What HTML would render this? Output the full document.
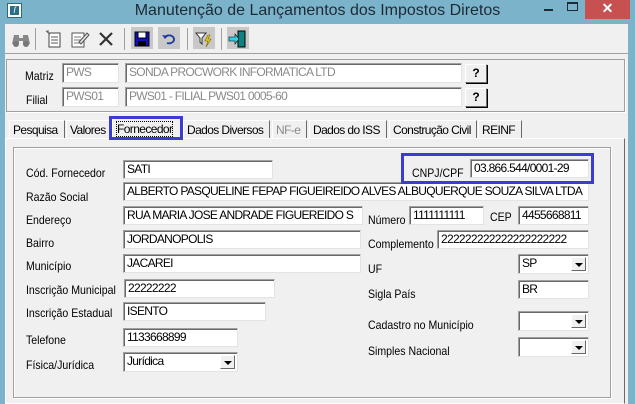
<!DOCTYPE html>
<html><head><meta charset="utf-8"><style>
*{box-sizing:border-box;margin:0;padding:0}
body{width:635px;height:404px;background:#7bb3cb;position:relative;overflow:hidden;font-family:"Liberation Sans",sans-serif;font-size:12px;color:#000}
.a{position:absolute}
.client{left:5px;top:24px;width:623px;height:380px;background:#f0f0f0}
.inp{position:absolute;background:#fff;border-top:1px solid #a0a0a0;border-left:1px solid #a0a0a0;border-right:1px solid #e3e3e3;border-bottom:1px solid #e3e3e3;box-shadow:inset 1px 1px 0 #696969;padding:1px 0 0 3px;font-size:12px;white-space:nowrap;overflow:hidden;letter-spacing:-0.7px;line-height:15px}
.dis{color:#8a8a8a}
.lbl{position:absolute;font-size:12px;white-space:nowrap;transform:scaleX(0.88);transform-origin:left top}
.btn{position:absolute;background:#f0f0f0;border:1px solid #fff;border-right-color:#696969;border-bottom-color:#696969;box-shadow:1px 1px 0 #000;font-weight:bold;text-align:center;line-height:17px}
.dd{position:absolute;right:2px;top:2px;width:15px;height:14px;background:#f0f0f0;border:1px solid #fff;border-right-color:#696969;border-bottom-color:#696969}
.dd:after{content:"";position:absolute;left:3px;top:5px;border-left:4px solid transparent;border-right:4px solid transparent;border-top:4px solid #000}
.tab{position:absolute;top:120px;height:18px;border:1px solid #fff;border-right-color:#696969;border-bottom:none;padding:2px 3px 0;font-size:12px;letter-spacing:-0.6px;white-space:nowrap;overflow:hidden}
.ico{position:absolute;top:29px;width:20px;height:20px}
</style></head><body>
<div class="a" style="left:7px;top:3px;width:15px;height:15px;background:#fff;border:1px solid #2d6a7b"><div style="position:absolute;left:2px;top:2px;width:9px;height:9px;background:#2a6f86;color:#fff;font-size:9px;line-height:9px;text-align:center;font-style:italic">ſ</div></div>
<div class="a" style="left:0;top:0;width:635px;text-align:center;font-size:16px;line-height:22px;color:#1e2a34">Manutenção de Lançamentos dos Impostos Diretos</div>
<div class="a" style="left:544px;top:9px;width:9px;height:2px;background:#1e2a34"></div>
<div class="a" style="left:567px;top:2px;width:11px;height:9px;border:1px solid #1e2a34;border-top-width:2px"></div>
<div class="a" style="left:585px;top:0;width:45px;height:19px;background:#c75050;color:#fff;text-align:center;font-size:14px;line-height:17px;font-weight:bold">✕</div>
<div class="a client"></div>
<!-- toolbar -->
<svg class="ico" style="left:11px" viewBox="0 0 20 20"><path d="M3 6h5v3h4V6h5l2 9h-7v-3H8v3H1z" fill="#888"/><circle cx="5" cy="15" r="3" fill="#777"/><circle cx="15" cy="15" r="3" fill="#777"/></svg>
<div class="a" style="left:35px;top:28px;width:1px;height:22px;background:#a0a0a0"></div>
<svg class="ico" style="left:44px" viewBox="0 0 20 20"><rect x="5" y="4" width="11" height="14" fill="#fff" stroke="#444"/><path d="M7 8h7M7 11h7M7 14h7" stroke="#555"/><path d="M2 2l4 3M4 1v3" stroke="#555"/></svg>
<svg class="ico" style="left:70px" viewBox="0 0 20 20"><rect x="2" y="4" width="12" height="14" fill="#fff" stroke="#555"/><path d="M4 8h7M4 11h7M4 14h7" stroke="#777"/><path d="M9 13l8-9 2 2-8 9z" fill="#ddd" stroke="#555"/></svg>
<svg class="ico" style="left:96px" viewBox="0 0 20 20"><path d="M4 4l12 12M16 4L4 16" stroke="#333" stroke-width="2.2"/></svg>
<div class="a" style="left:124px;top:28px;width:1px;height:22px;background:#a0a0a0"></div>
<div class="a" style="left:131px;top:27px;width:22px;height:22px;background:#c8c8c8"></div>
<svg class="ico" style="left:132px" viewBox="0 0 20 20"><rect x="3" y="3" width="14" height="14" fill="#1010c0" stroke="#000"/><rect x="6" y="3" width="8" height="6" fill="#fff" stroke="#000"/><rect x="6" y="12" width="8" height="5" fill="#000"/></svg>
<div class="a" style="left:158px;top:27px;width:22px;height:22px;background:#c8c8c8"></div>
<svg class="ico" style="left:159px" viewBox="0 0 20 20"><path d="M6 8a5 4 0 1 1 2 6" fill="none" stroke="#1a3aa0" stroke-width="1.8"/><path d="M3 6l3 4 3-3z" fill="#1a3aa0"/></svg>
<div class="a" style="left:187px;top:28px;width:1px;height:22px;background:#a0a0a0"></div>
<div class="a" style="left:193px;top:27px;width:22px;height:22px;background:#c8c8c8"></div>
<svg class="ico" style="left:194px" viewBox="0 0 20 20"><path d="M2 4h10l-4 5v6l-2-2V9z" fill="#fff" stroke="#333"/><path d="M14 6l-3 6h3l-2 6 5-8h-3l2-4z" fill="#e8d000" stroke="#806000" stroke-width=".6"/></svg>
<div class="a" style="left:221px;top:28px;width:1px;height:22px;background:#a0a0a0"></div>
<div class="a" style="left:227px;top:27px;width:22px;height:22px;background:#c8c8c8"></div>
<svg class="ico" style="left:228px" viewBox="0 0 20 20"><rect x="10" y="2" width="7" height="16" fill="#108080" stroke="#000"/><path d="M1 8h6V5l4 5-4 5v-3H1z" fill="#30d0e8" stroke="#000" stroke-width=".6"/></svg>
<div class="a" style="left:5px;top:53px;width:623px;height:1px;background:#a0a0a0"></div>
<!-- matriz panel -->
<div class="a" style="left:6px;top:59px;width:619px;height:53px;border:1px solid #a0a0a0;box-shadow:1px 1px 0 #fff"></div>
<div class="lbl" style="left:25px;top:69px">Matriz</div>
<div class="lbl" style="left:26px;top:93px">Filial</div>
<div class="inp dis" style="left:62px;top:63px;width:57px;height:20px">PWS</div>
<div class="inp dis" style="left:125px;top:63px;width:337px;height:20px">SONDA PROCWORK INFORMATICA LTD</div>
<div class="btn" style="left:465px;top:64px;width:22px;height:19px">?</div>
<div class="inp dis" style="left:62px;top:87px;width:57px;height:20px">PWS01</div>
<div class="inp dis" style="left:125px;top:87px;width:337px;height:20px">PWS01 - FILIAL PWS01 0005-60</div>
<div class="btn" style="left:465px;top:88px;width:22px;height:19px">?</div>
<!-- tab page -->
<div class="a" style="left:5px;top:138px;width:620px;height:266px;border:1px solid #fff;border-right-color:#696969"></div>
<div class="tab" style="left:9px;width:56px">Pesquisa</div>
<div class="tab" style="left:66px;width:45px">Valores</div>
<div class="tab" style="left:183px;width:87px">Dados Diversos</div>
<div class="tab" style="left:272px;width:35px;color:#8a8a8a">NF-e</div>
<div class="tab" style="left:309px;width:78px">Dados do ISS</div>
<div class="tab" style="left:389px;width:88px">Construção Civil</div>
<div class="tab" style="left:478px;width:44px">REINF</div>
<div class="tab" style="left:112px;top:118px;height:21px;width:69px;background:#f0f0f0;padding-top:3px;padding-left:4px"><span style="outline:1px dotted #000">Fornecedor</span></div>
<div class="a" style="left:109px;top:116px;width:74px;height:24px;border:3px solid #3c3cd0"></div>
<!-- group -->
<div class="a" style="left:13px;top:147px;width:598px;height:251px;border:1px solid #a0a0a0;box-shadow:1px 1px 0 #fff,inset 1px 1px 0 #fff"></div>
<div class="lbl" style="left:26px;top:166px">Cód. Fornecedor</div>
<div class="lbl" style="left:26px;top:190px">Razão Social</div>
<div class="lbl" style="left:26px;top:213px">Endereço</div>
<div class="lbl" style="left:26px;top:236px">Bairro</div>
<div class="lbl" style="left:26px;top:259px">Município</div>
<div class="lbl" style="left:26px;top:283px">Inscrição Municipal</div>
<div class="lbl" style="left:26px;top:306px">Inscrição Estadual</div>
<div class="lbl" style="left:26px;top:333px">Telefone</div>
<div class="lbl" style="left:26px;top:358px">Física/Jurídica</div>
<div class="inp" style="left:123px;top:160px;width:150px;height:19px">SATI</div>
<div class="inp" style="left:123px;top:182px;width:466px;height:19px">ALBERTO PASQUELINE FEPAP FIGUEIREIDO ALVES ALBUQUERQUE SOUZA SILVA LTDA</div>
<div class="inp" style="left:123px;top:206px;width:240px;height:19px">RUA MARIA JOSE ANDRADE FIGUEREIDO S</div>
<div class="inp" style="left:123px;top:230px;width:238px;height:19px">JORDANOPOLIS</div>
<div class="inp" style="left:123px;top:254px;width:238px;height:19px">JACAREI</div>
<div class="inp" style="left:124px;top:279px;width:151px;height:19px">22222222</div>
<div class="inp" style="left:123px;top:302px;width:143px;height:19px">ISENTO</div>
<div class="inp" style="left:123px;top:328px;width:115px;height:19px">1133668899</div>
<div class="inp" style="left:123px;top:352px;width:115px;height:20px">Jurídica<div class="dd"></div></div>
<div class="a" style="left:401px;top:153px;width:193px;height:31px;border:3px solid #3c3cd0"></div>
<div class="lbl" style="left:412px;top:166px">CNPJ/CPF</div>
<div class="inp" style="left:470px;top:159px;width:119px;height:19px">03.866.544/0001-29</div>
<div class="lbl" style="left:368px;top:213px">Número</div>
<div class="inp" style="left:409px;top:206px;width:75px;height:19px">1111111111</div>
<div class="lbl" style="left:490px;top:210px">CEP</div>
<div class="inp" style="left:518px;top:206px;width:71px;height:19px">4455668811</div>
<div class="lbl" style="left:368px;top:237px">Complemento</div>
<div class="inp" style="left:437px;top:230px;width:152px;height:19px">222222222222222222222</div>
<div class="lbl" style="left:368px;top:262px">UF</div>
<div class="inp" style="left:518px;top:254px;width:71px;height:20px">SP<div class="dd"></div></div>
<div class="lbl" style="left:368px;top:287px">Sigla País</div>
<div class="inp" style="left:518px;top:280px;width:71px;height:19px">BR</div>
<div class="lbl" style="left:368px;top:318px">Cadastro no Município</div>
<div class="inp" style="left:518px;top:311px;width:71px;height:20px"><div class="dd"></div></div>
<div class="lbl" style="left:368px;top:344px">Simples Nacional</div>
<div class="inp" style="left:518px;top:337px;width:71px;height:20px"><div class="dd"></div></div>
</body></html>
